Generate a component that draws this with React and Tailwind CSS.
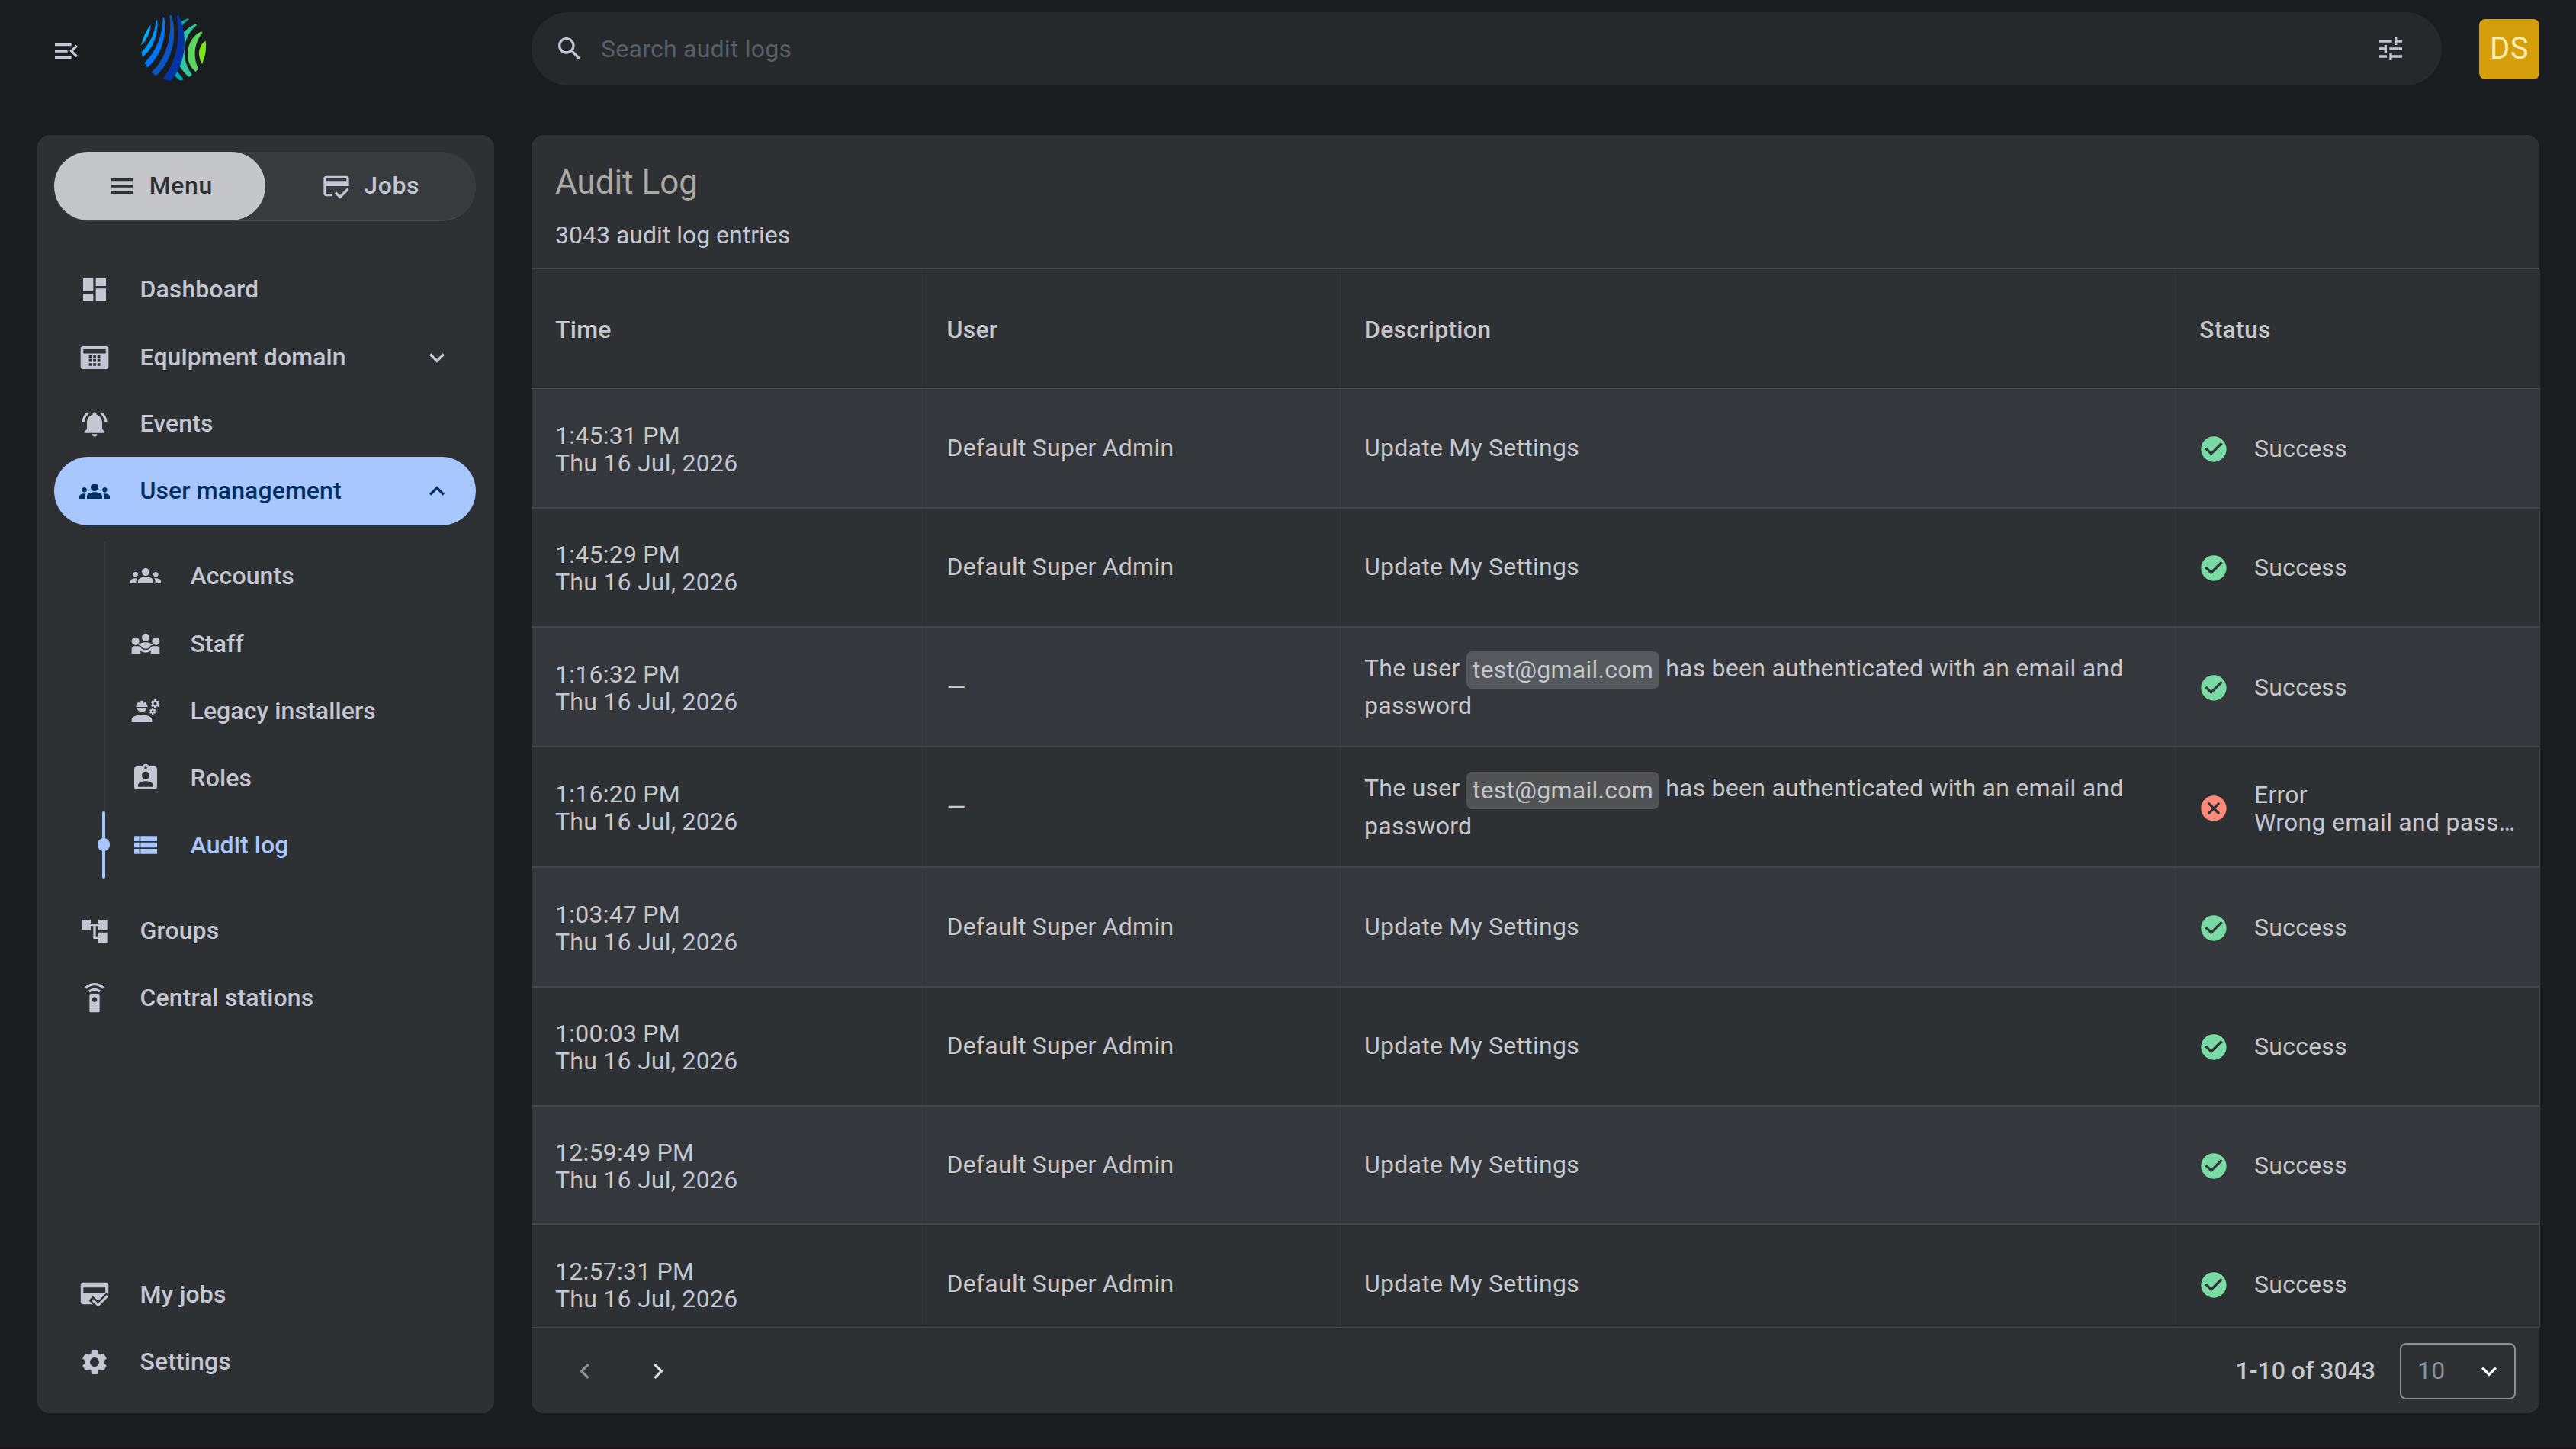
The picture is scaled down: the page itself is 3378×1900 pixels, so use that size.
import React from "react";
import {
  MdAccountTree,
  MdAssignmentInd,
  MdCancel,
  MdCheckCircle,
  MdChevronLeft,
  MdChevronRight,
  MdDashboard,
  MdEngineering,
  MdExpandLess,
  MdExpandMore,
  MdGroups,
  MdMenu,
  MdMenuOpen,
  MdNotificationsActive,
  MdOutlineCreditScore,
  MdSearch,
  MdSettings,
  MdSettingsRemote,
  MdTune,
  MdViewList,
} from "react-icons/md";

function Logo() {
  return (
    <svg viewBox="74 59 258 259" className="h-[86px] w-[86px] shrink-0">
      <path fill="#00adfb" d="M112 97Q84 128 74 179Q106 148 112 97Z" />
      <path fill="#0092ff" d="M132 80C129 130 108 170 75 205L79 225C120 190 142 140 138 77Z" />
      <path fill="#0076ff" d="M159 67C160 140 130 205 87 247L99 265C147 225 177 150 165 66Z" />
      <path fill="#0a55c3" d="M186 60C197 150 170 235 114 284L133 298C192 245 220 150 194 60Z" />
      <path fill="#00a5b8" d="M230 84L257 72L264 74Q245 84 232 108Z" />
      <path fill="#00a5b8" d="M205 296L224 315Q233 317 242 312L216 280Z" />
      <path fill="#2fc89b" d="M289 93Q258 108 238 130L240 200L225 258Q242 288 263 303L275 293C236 245 226 150 294 98Z" />
      <path fill="#0433a6" d="M214 60C227 150 218 240 158 310Q174 317 190 318C240 265 268 160 222 60Z" />
      <path fill="#5cd65c" d="M311 123C250 150 238 245 290 282L300 270C276 225 284 165 316 128Z" />
      <path fill="#7ce813" d="M328 160Q335 205 314 252Q298 222 304 195Q311 170 328 160Z" />
    </svg>
  );
}

function KeypadIcon({ className }) {
  return (
    <svg viewBox="0 0 24 24" fill="currentColor" fillRule="evenodd" className={className}>
      <path d="M3 3h18a2 2 0 0 1 2 2v14a2 2 0 0 1-2 2H3a2 2 0 0 1-2-2V5a2 2 0 0 1 2-2zM3.2 5.3v3.4h17.6V5.3zM7.6 9.9v2.2h2.3V9.9zm3.3 0v2.2h2.3V9.9zm3.3 0v2.2h2.3V9.9zM7.6 13.1v2.2h2.3v-2.2zm3.3 0v2.2h2.3v-2.2zm3.3 0v2.2h2.3v-2.2zM7.6 16.3v2.2h2.3v-2.2zm3.3 0v2.2h2.3v-2.2zm3.3 0v2.2h2.3v-2.2z" />
    </svg>
  );
}

function StaffIcon({ className }) {
  return (
    <svg viewBox="0 0 24 24" fill="currentColor" className={className}>
      <path d="M6.32 13.01c.96.02 1.85.5 2.45 1.34C9.5 15.38 10.71 16 12 16s2.5-.62 3.23-1.66c.6-.84 1.49-1.32 2.45-1.34C16.96 11.78 14.08 11 12 11s-4.96.78-5.68 2.01zM4 13c1.66 0 3-1.34 3-3S5.66 7 4 7s-3 1.34-3 3 1.34 3 3 3zM20 13c1.66 0 3-1.34 3-3s-1.34-3-3-3-3 1.34-3 3 1.34 3 3 3zM12 10c1.66 0 3-1.34 3-3s-1.34-3-3-3-3 1.34-3 3 1.34 3 3 3z" />
      <path d="M21 14h-3.27c-.77 0-1.35.45-1.68.92-.04.06-1.36 2.08-4.05 2.08-1.43 0-3.03-.64-4.05-2.08-.39-.55-1-.92-1.68-.92H3c-1.1 0-2 .9-2 2v4h7v-2.26c1.15.8 2.54 1.26 4 1.26s2.85-.46 4-1.26V20h7v-4c0-1.1-.9-2-2-2z" />
    </svg>
  );
}

function MyJobsIcon({ className }) {
  return (
    <svg viewBox="0 0 24 24" className={className}>
      <path
        fill="currentColor"
        fillRule="evenodd"
        d="M3 2.2h18a1.9 1.9 0 0 1 1.9 1.9v6.8L14.9 18.6V19.3H3a1.9 1.9 0 0 1-1.9-1.9V4.1a1.9 1.9 0 0 1 1.9-1.9zM3.2 6.2v4.5h17.3V6.2z"
      />
      <path d="M9.1 14.6L14.9 20.1L23 12" fill="none" stroke="#2d3134" strokeWidth="4.8" />
      <path d="M10.2 15.9L14.9 20L22.2 12.7" fill="none" stroke="currentColor" strokeWidth="2" />
    </svg>
  );
}

function NavItem({ icon: Icon, label, height, active, chevron: Chevron }) {
  return (
    <a
      className={`flex items-center rounded-full pl-[33px] pr-[31px] ${height} ${
        active ? "bg-[#a8c7ff] text-[#003062]" : "text-[#c4c6d2]"
      }`}
    >
      <Icon className="h-10 w-10 shrink-0" />
      <span className="relative -top-px ml-[39.5px] grow font-medium tracking-[0.1px]">{label}</span>
      {Chevron && <Chevron className="h-10 w-10" />}
    </a>
  );
}

function SubItem({ icon: Icon, label, height, active }) {
  return (
    <a className={`relative flex items-center pl-[99.5px] ${height} ${active ? "text-[#a8c7ff]" : "text-[#c4c6d2]"}`}>
      {active && (
        <span className="absolute inset-y-0 left-[63px] w-1 rounded-full bg-[#a8c7ff]">
          <span className="absolute -left-1.5 top-[35px] h-[17px] w-4 rounded-full bg-[#a8c7ff]" />
        </span>
      )}
      <Icon className="h-10 w-10 shrink-0" />
      <span className="ml-[39px] font-medium tracking-[0.1px]">{label}</span>
    </a>
  );
}

function Sidebar() {
  return (
    <aside className="flex h-[1676px] w-[599px] flex-col rounded-2xl bg-[#2d3134] pl-[22px] pr-6 pt-[22px] pb-[23px]">
      <div className="flex h-[91px] rounded-full border-b border-[#45494c] bg-[#383b3e] font-medium tracking-[0.6px]">
        <button className="flex flex-1 items-center justify-center gap-4 rounded-full bg-[#c5c6ca] pb-px text-[#2d3134]">
          <MdMenu className="h-10 w-10" />
          <span className="relative -top-px">Menu</span>
        </button>
        <button className="flex flex-1 items-center justify-center gap-4 text-[#c4c6d2]">
          <MdOutlineCreditScore className="h-10 w-10" />
          <span className="relative -top-px">Jobs</span>
        </button>
      </div>

      <nav className="mt-[45px] flex grow flex-col">
        <NavItem icon={MdDashboard} label="Dashboard" height="h-[89px]" />
        <NavItem icon={KeypadIcon} label="Equipment domain" height="h-[89px]" chevron={MdExpandMore} />
        <NavItem icon={MdNotificationsActive} label="Events" height="h-[86px]" />
        <NavItem icon={MdGroups} label="User management" height="h-[90px]" active chevron={MdExpandLess} />
        <div className="relative mt-[22px] flex flex-col">
          <span className="absolute bottom-[88px] left-[65px] top-0 w-0.5 bg-[#383c3f]" />
          <SubItem icon={MdGroups} label="Accounts" height="h-[88px]" />
          <SubItem icon={StaffIcon} label="Staff" height="h-[89px]" />
          <SubItem icon={MdEngineering} label="Legacy installers" height="h-[88px]" />
          <SubItem icon={MdAssignmentInd} label="Roles" height="h-[88px]" />
          <SubItem icon={MdViewList} label="Audit log" height="h-[88px]" active />
        </div>
        <div className="mt-6 flex flex-col">
          <NavItem icon={MdAccountTree} label="Groups" height="h-[89px]" />
          <NavItem icon={MdSettingsRemote} label="Central stations" height="h-[88px]" />
        </div>
        <div className="mt-auto flex flex-col">
          <NavItem icon={MyJobsIcon} label="My jobs" height="h-[88px]" />
          <NavItem icon={MdSettings} label="Settings" height="h-[88px]" />
        </div>
      </nav>
    </aside>
  );
}

const DATE = "Thu 16 Jul, 2026";
const ADMIN = "Default Super Admin";
const ROWS = [
  { time: "1:45:31 PM", height: "h-[157px]", user: ADMIN },
  { time: "1:45:29 PM", height: "h-[156px]", user: ADMIN },
  { time: "1:16:32 PM", height: "h-[157px]", email: "test@gmail.com", chip: "bg-[#55585d]" },
  { time: "1:16:20 PM", height: "h-[158px]", email: "test@gmail.com", chip: "bg-[#505254]", error: "Wrong email and pass…" },
  { time: "1:03:47 PM", height: "h-[157px]", user: ADMIN },
  { time: "1:00:03 PM", height: "h-[156px]", user: ADMIN },
  { time: "12:59:49 PM", height: "h-[155px]", user: ADMIN },
  { time: "12:57:31 PM", height: "h-[157px]", user: ADMIN },
];

const GRID = "grid grid-cols-[513px_548px_1095px_478px]";
const CELL = "flex items-center border-r border-white/[0.03]";

function Row({ row, striped }) {
  return (
    <div className={`${GRID} ${row.height} shrink-0 border-b-2 border-[#42464a] ${striped ? "bg-[#34373c]" : "bg-[#2d3134]"}`}>
      <div className={`${CELL} pl-[31px]`}>
        <div className="relative top-px leading-9">
          <div>{row.time}</div>
          <div className="text-[#c3c6d4]">{DATE}</div>
        </div>
      </div>
      <div className={`${CELL} pl-[31.5px]`}>
        {row.user ? <span className="relative -top-px">{row.user}</span> : <span>—</span>}
      </div>
      <div className={`${CELL} pl-[31px] leading-[44px]`}>
        {row.email ? (
          <p>
            The user{" "}
            <span className={`inline-block h-[49px] rounded-lg px-2 align-middle leading-[48px] ${row.chip}`}>{row.email}</span> has
            been authenticated with an email and
            <br />
            password
          </p>
        ) : (
          <p className="relative -top-px">Update My Settings</p>
        )}
      </div>
      <div className="flex items-center border-r border-[#42464a] pl-[30px]">
        {row.error ? (
          <MdCancel className="relative top-0.5 h-10 w-10 text-[#ff8a7a]" />
        ) : (
          <MdCheckCircle className="relative top-px h-10 w-10 text-[#79dba3]" />
        )}
        {row.error ? (
          <div className="relative top-0.5 ml-[33px] leading-9">
            <div>Error</div>
            <div className="text-[#c3c6d4]">{row.error}</div>
          </div>
        ) : (
          <span className="ml-[33px] leading-9">Success</span>
        )}
      </div>
    </div>
  );
}

function AuditLog() {
  return (
    <main className="flex h-[1676px] w-[2633px] flex-col rounded-2xl bg-[#2d3134] text-[#c6c7ca] tracking-[0.25px]">
      <header className="flex h-44 flex-col border-b border-[#45494c] pl-[31px]">
        <h1 className="mt-8 text-[44px] leading-[60px] tracking-normal text-[#aba8a2]">Audit Log</h1>
        <p className="mt-[15px] leading-[48px] tracking-normal text-[#c4c6d2]">3043 audit log entries</p>
      </header>
      <div className="flex h-[1387px] w-[2634px] flex-col overflow-hidden">
        <div className={`${GRID} h-[157px] shrink-0 border-b border-[#45494c] bg-[#2d3134] pt-px font-medium`}>
          <div className={`${CELL} pl-[31px]`}>Time</div>
          <div className={`${CELL} pl-[31.5px]`}>User</div>
          <div className={`${CELL} pl-[31px]`}>Description</div>
          <div className="flex items-center pl-[31px]">Status</div>
        </div>
        {ROWS.map((row, i) => (
          <Row key={row.time} row={row} striped={[0, 2, 4, 6].includes(i)} />
        ))}
      </div>
      <footer className="flex grow items-center border-t border-[#45494c] pl-[50px] pr-[31px] pt-px">
        <MdChevronLeft className="h-10 w-10 text-[#8f9194]" />
        <MdChevronRight className="ml-14 h-10 w-10 text-[#dcdde2]" />
        <span className="relative -top-px ml-auto font-medium tracking-normal">1-10 of 3043</span>
        <div className="ml-8 flex h-[74px] w-[152px] items-center justify-between rounded-lg border-2 border-[#8b8e97] pl-[21px] pr-[13px] text-[#8b8e97]">
          <span className="relative -top-px">10</span>
          <MdExpandMore className="h-10 w-10 text-white" />
        </div>
      </footer>
    </main>
  );
}

export default function App() {
  return (
    <div className="flex h-[1900px] w-[3378px] flex-col overflow-hidden border-b border-[#1d0f14] bg-[#191d20] font-['Roboto',sans-serif] text-[32px] leading-[38px]">
      <div className="flex h-[177px] shrink-0 items-start pl-[67px] pr-12">
        <div className="flex w-[630px] items-start text-[#c4c6d2]">
          <MdMenuOpen className="mt-[47px] h-10 w-10" />
          <div className="ml-[78px] mt-5">
            <Logo />
          </div>
        </div>
        <div className="mt-4 flex h-24 w-[2505px] items-center rounded-full bg-[#26292c] pl-[30px] pr-[47px] text-[#c4c6d2]">
          <MdSearch className="h-10 w-10" />
          <span className="ml-[21px] grow tracking-[0.25px] text-[#5b5e65]">Search audit logs</span>
          <MdTune className="h-10 w-10" />
        </div>
        <div className="ml-[49px] mt-[25px] flex h-[79px] w-[79px] items-center justify-center rounded-lg bg-[#d49f0b] pb-0.5 text-[40px] tracking-[0.5px] text-[#ffebae]">
          DS
        </div>
      </div>
      <div className="flex gap-[49px] pl-[49px]">
        <Sidebar />
        <AuditLog />
      </div>
    </div>
  );
}
